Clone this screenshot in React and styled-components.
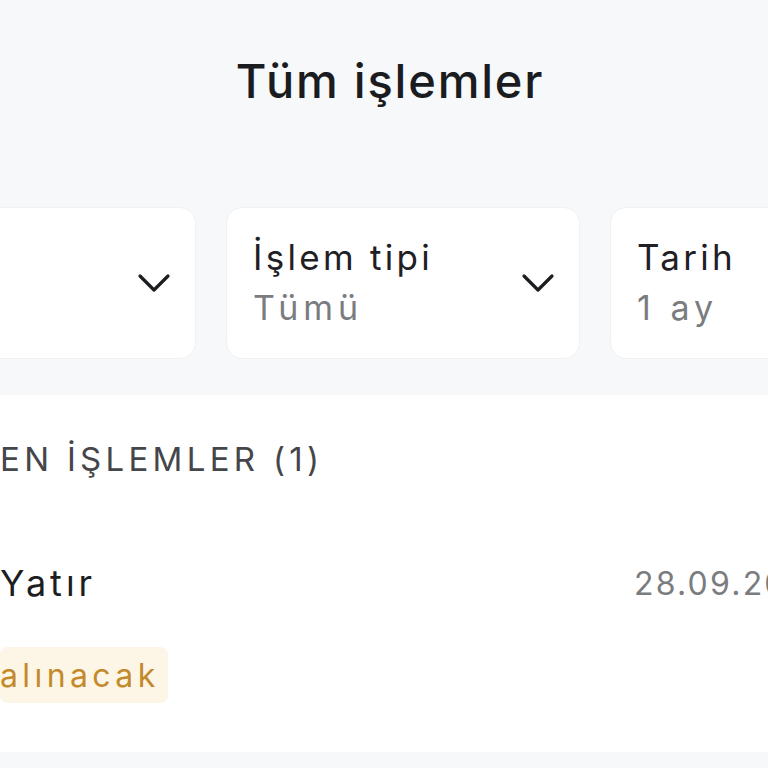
import React from "react";
import styled, { createGlobalStyle } from "styled-components";

const GlobalStyle = createGlobalStyle`
  html, body {
    margin: 0;
    padding: 0;
    background: #f7f8fa;
  }
  body {
    font-family: "Inter", "Noto Sans", sans-serif;
    -webkit-font-smoothing: antialiased;
  }
`;

const Page = styled.div`
  width: 768px;
  height: 768px;
  overflow: hidden;
  background: #f7f8fa;
`;

const Header = styled.header`
  height: 160px;
  display: flex;
  align-items: center;
  justify-content: center;
  padding-left: 12px;
  box-sizing: border-box;
`;

const Title = styled.h1`
  margin: 0;
  font-size: 47px;
  font-weight: 500;
  color: #1b1c1f;
  letter-spacing: 1.8px;
`;

const FilterRow = styled.div`
  display: flex;
  gap: 30px;
  margin: 47px 0 0 -158px;
`;

const FilterCard = styled.button`
  flex: 0 0 354px;
  height: 152px;
  box-sizing: border-box;
  display: flex;
  align-items: center;
  justify-content: space-between;
  padding: 0 24px 0 26px;
  background: #ffffff;
  border: 1px solid #eff1f4;
  border-radius: 16px;
  font-family: inherit;
  text-align: left;
  cursor: pointer;
`;

const FilterText = styled.div`
  display: flex;
  flex-direction: column;
  gap: 8px;
`;

const FilterLabel = styled.span`
  font-size: 35px;
  line-height: 42px;
  color: #1f2024;
  letter-spacing: 3.3px;
`;

const FilterValue = styled.span`
  font-size: 34px;
  line-height: 44px;
  color: #7b7c80;
  letter-spacing: 5px;
`;

const Chevron = () => (
  <svg width="34" height="22" viewBox="0 0 34 22" fill="none">
    <path
      d="M3 4l14 14L31 4"
      stroke="#1d1e22"
      strokeWidth="3.2"
      strokeLinecap="round"
      strokeLinejoin="round"
    />
  </svg>
);

const ListSection = styled.section`
  margin-top: 36px;
  height: 357px;
  background: #ffffff;
  padding-top: 44px;
  box-sizing: border-box;
`;

const SectionTitle = styled.h2`
  margin: 0;
  font-size: 33px;
  line-height: 40px;
  font-weight: 400;
  color: #45464a;
  letter-spacing: 4.3px;
  white-space: nowrap;
`;

const ItemRow = styled.div`
  display: grid;
  grid-template-columns: 634px 1fr;
  align-items: center;
  margin-top: 82px;
  height: 44px;
`;

const ItemTitle = styled.span`
  font-size: 36px;
  color: #1d1e22;
  letter-spacing: 4px;
`;

const ItemDate = styled.span`
  font-size: 32px;
  color: #7b7c80;
  white-space: nowrap;
  letter-spacing: 2.2px;
`;

const Badge = styled.span`
  display: inline-flex;
  align-items: center;
  height: 56px;
  margin-top: 42px;
  padding: 0 8px 0 0;
  background: #fdf6e7;
  border-radius: 8px;
  font-size: 32px;
  color: #c38a2c;
  letter-spacing: 4.4px;
`;

const filters = [
  { label: "", value: "" },
  { label: "İşlem tipi", value: "Tümü" },
  { label: "Tarih", value: "1 ay" },
];

export default function App() {
  return (
    <Page>
      <GlobalStyle />
      <Header>
        <Title>Tüm işlemler</Title>
      </Header>
      <FilterRow>
        {filters.map((f, i) => (
          <FilterCard key={i}>
            <FilterText>
              {f.label && <FilterLabel>{f.label}</FilterLabel>}
              {f.value && <FilterValue>{f.value}</FilterValue>}
            </FilterText>
            <Chevron />
          </FilterCard>
        ))}
      </FilterRow>
      <ListSection>
        <SectionTitle>EN İŞLEMLER (1)</SectionTitle>
        <ItemRow>
          <ItemTitle>Yatır</ItemTitle>
          <ItemDate>28.09.2023</ItemDate>
        </ItemRow>
        <Badge>alınacak</Badge>
      </ListSection>
    </Page>
  );
}
